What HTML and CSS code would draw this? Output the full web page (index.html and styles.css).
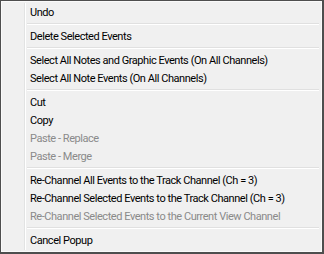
FILE: index.html
```html
<!DOCTYPE html>
<html lang="en">
<head>
  <meta charset="UTF-8" />
  <title>Popup Menu</title>
  <link rel="stylesheet" href="styles.css">
</head>
<body>

  <div class="menu">
    <div class="item">Undo</div>
    <div class="sep"></div>
    <div class="item">Delete Selected Events</div>
    <div class="sep"></div>
    <div class="item">Select All Notes and Graphic Events (On All Channels)</div>
    <div class="item">Select All Note Events (On All Channels)</div>
    <div class="sep"></div>
    <div class="item">Cut</div>
    <div class="item">Copy</div>
    <div class="item disabled">Paste - Replace</div>
    <div class="item disabled">Paste - Merge</div>
    <div class="sep"></div>
    <div class="item">Re-Channel All Events to the Track Channel (Ch = 3)</div>
    <div class="item">Re-Channel Selected Events to the Track Channel (Ch = 3)</div>
    <div class="item disabled">Re-Channel Selected Events to the Current View Channel</div>
    <div class="sep"></div>
    <div class="item">Cancel Popup</div>
  </div>

</body>
</html>
```

FILE: styles.css
```css
* {
  box-sizing: border-box;
  margin: 0;
  padding: 0;
}

body {
  font-family: Roboto, 'Open Sans', sans-serif;
  background: #f0f0f0;
}

.menu {
  width: 324px;
  height: 254px;
  background: #f0f0f0;
  border: 1px solid #4e4e4e;
  border-right-width: 2px;
  border-bottom-width: 2px;
  box-shadow: inset 1px 1px 0 #fafafa, inset -1px -1px 0 #fafafa;
  padding: 2px;
  display: flex;
  flex-direction: column;
  position: relative;
}

/* gutter line */
.menu::before {
  content: '';
  position: absolute;
  top: 2px;
  bottom: 2px;
  left: 23px;
  width: 1px;
  background: #e2e3e3;
  box-shadow: 1px 0 0 #ffffff;
}

.item {
  height: 18px;
  line-height: 17px;
  padding-top: 1px;
  padding-left: 27px;
  font-size: 11px;
  letter-spacing: -0.45px;
  color: #000;
  white-space: nowrap;
}

.item.disabled {
  color: #8a8a8a;
}

.sep {
  height: 6px;
  margin-left: 24px;
  margin-right: 1px;
  position: relative;
}

.sep::after {
  content: '';
  position: absolute;
  left: 0;
  right: 0;
  top: 2px;
  height: 1px;
  background: #e0e0e0;
  box-shadow: 0 1px 0 #ffffff;
}
```
